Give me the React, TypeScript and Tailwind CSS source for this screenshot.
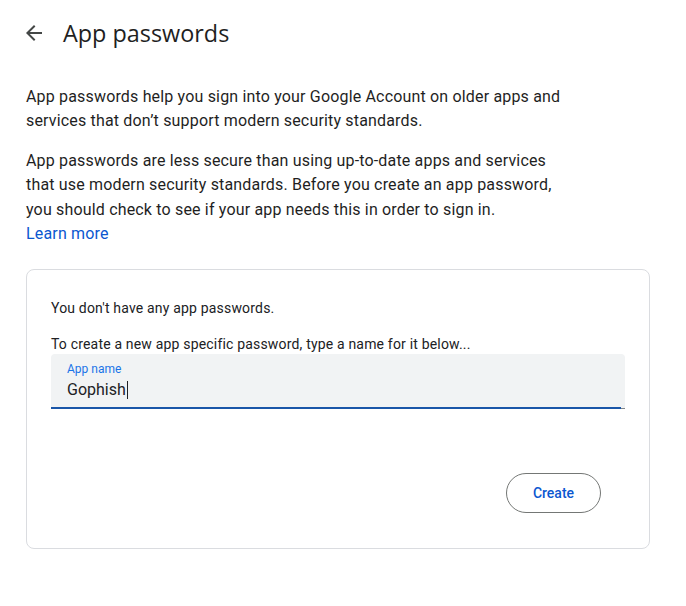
import React from "react";

export default function App() {
  return (
    <div className="min-h-[606px] w-[686px] bg-white text-[#1f1f1f]" style={{ fontFamily: "Roboto, 'Noto Sans', sans-serif" }}>
      <div className="flex items-center pl-[22px] pt-[19px]">
        <svg width="24" height="24" viewBox="0 0 24 24" className="text-[#444746]">
          <path d="M20 11H7.83l5.59-5.59L12 4l-8 8 8 8 1.41-1.41L7.83 13H20v-2z" fill="currentColor" />
        </svg>
        <h1 className="ml-[17px] text-[23.4px] leading-[28px] text-[#1f1f1f]" style={{ fontFamily: "'Open Sans', Roboto, sans-serif" }}>App passwords</h1>
      </div>
      <div className="px-[26px] pt-[38px] text-[16px] leading-[24.4px] tracking-[0.17px] text-[#1f1f1f]">
        <p>
          App passwords help you sign into your Google Account on older apps and
          <br />
          services that don’t support modern security standards.
        </p>
        <p className="mt-[15px]">
          App passwords are less secure than using up-to-date apps and services
          <br />
          that use modern security standards. Before you create an app password,
          <br />
          you should check to see if your app needs this in order to sign in.
        </p>
        <a className="block text-[#0b57d0]">Learn more</a>
      </div>
      <div className="mx-[26px] mt-[23px] h-[280px] w-[624px] rounded-[8px] border border-[#dadce0] px-[24px] pt-[28px]">
        <p className="text-[14px] leading-[20px] tracking-[0.18px] text-[#202124]">You don't have any app passwords.</p>
        <p className="mt-[16px] text-[14px] leading-[20px] tracking-[0.18px] text-[#202124]">To create a new app specific password, type a name for it below...</p>
        <div className="relative h-[55px] w-[574px] rounded-t-[4px] bg-[#f1f3f4]">
          <div className="pl-[16px] pt-[7px] text-[12px] leading-[16px] text-[#1a73e8]">App name</div>
          <div className="mt-[2px] flex items-center pl-[16px] text-[16px] leading-[22px] text-[#202124]">
            Gophish<span className="ml-[1px] inline-block h-[18px] w-[1px] bg-[#202124]"></span>
          </div>
          <div className="absolute bottom-0 left-0 h-[2px] w-[570px] bg-[#1a56a8]"></div>
          <div className="absolute bottom-0 right-0 h-[1px] w-[4px] bg-[#80868b]"></div>
        </div>
        <div className="mt-[64px] flex justify-end pr-[24px]">
          <button className="h-[40px] w-[95px] rounded-full border border-[#747775] text-[14px] font-medium text-[#0b57d0]">Create</button>
        </div>
      </div>
    </div>
  );
}
